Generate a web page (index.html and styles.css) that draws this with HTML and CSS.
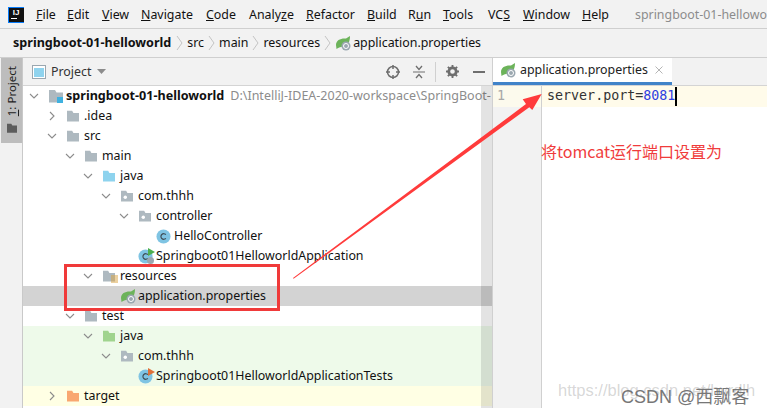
FILE: index.html
```html
<!DOCTYPE html>
<html lang="en">
<head>
<meta charset="utf-8">
<title>IntelliJ IDEA</title>
<link rel="stylesheet" href="styles.css">
</head>
<body>
<svg class="defs" width="0" height="0" aria-hidden="true">
  <defs>
    <symbol id="folder" viewBox="0 0 16 14"><path d="M1 1h6l1.500 2.500H15v10H1z"/></symbol>
    <symbol id="chev-d" viewBox="0 0 10 10"><path d="M1 3l4 4 4-4" fill="none" stroke="#8c8c8c" stroke-width="1.100"/></symbol>
    <symbol id="chev-r" viewBox="0 0 10 10"><path d="M3 1l4 4-4 4" fill="none" stroke="#8c8c8c" stroke-width="1.100"/></symbol>
    <symbol id="pkg" viewBox="0 0 16 14"><path d="M1 1h6l1.500 2.500H15v10H1z" fill="#aeb9c0"/><circle cx="6" cy="8.500" r="2" fill="#fff"/></symbol>
    <symbol id="leaf" viewBox="0 0 16 16"><path d="M1 10C1 5 6 3 11 3.500L15 1c0 6-2 10-7 10.500C5 12 3 13 1.500 14z" fill="#6cb35a"/><circle cx="11" cy="11" r="4.500" fill="#9aa7b0"/><circle cx="11" cy="11" r="2.500" fill="none" stroke="#fff"/></symbol>
    <symbol id="cls" viewBox="0 0 16 16"><circle cx="8" cy="8" r="7.500" fill="#7fc4e3"/><path d="M10.500 6a3 3 0 1 0 0 4" fill="none" stroke="#3d4a52" stroke-width="1.200"/></symbol>
  </defs>
</svg>

<div class="ide">
  <header class="menubar">
    <div class="logo"><span class="logo-text">IJ</span><i class="logo-bar"></i></div>
    <nav class="menus">
      <span class="m-file"><u>F</u>ile</span>
      <span class="m-edit"><u>E</u>dit</span>
      <span class="m-view"><u>V</u>iew</span>
      <span class="m-nav"><u>N</u>avigate</span>
      <span class="m-code"><u>C</u>ode</span>
      <span class="m-an">Analy<u>z</u>e</span>
      <span class="m-ref"><u>R</u>efactor</span>
      <span class="m-bui"><u>B</u>uild</span>
      <span class="m-run">R<u>u</u>n</span>
      <span class="m-too"><u>T</u>ools</span>
      <span class="m-vcs">VC<u>S</u></span>
      <span class="m-win"><u>W</u>indow</span>
      <span class="m-hel"><u>H</u>elp</span>
    </nav>
    <span class="wintitle">springboot-01-hellowo</span>
  </header>

  <div class="crumbs">
    <strong>springboot-01-helloworld</strong>
    <svg class="sep" width="7" height="16" viewBox="0 0 7 16"><path d="M1 1l5 7-5 7" fill="none" stroke="#c4c4c4"/></svg>
    <span>src</span>
    <svg class="sep" width="7" height="16" viewBox="0 0 7 16"><path d="M1 1l5 7-5 7" fill="none" stroke="#c4c4c4"/></svg>
    <span>main</span>
    <svg class="sep" width="7" height="16" viewBox="0 0 7 16"><path d="M1 1l5 7-5 7" fill="none" stroke="#c4c4c4"/></svg>
    <span>resources</span>
    <svg class="sep" width="7" height="16" viewBox="0 0 7 16"><path d="M1 1l5 7-5 7" fill="none" stroke="#c4c4c4"/></svg>
    <svg class="ico16" width="16" height="16"><use href="#leaf"/></svg>
    <span>application.properties</span>
  </div>

  <div class="workspace">
    <aside class="strip">
      <div class="strip-tab">
        <span class="strip-label"><u>1</u>: Project</span>
        <svg class="f-dark" width="12" height="10"><use href="#folder"/></svg>
      </div>
    </aside>

    <section class="project">
      <div class="proj-head">
        <svg width="14" height="14" viewBox="0 0 14 14" class="proj-ico"><rect x=".5" y=".5" width="13" height="13" fill="#fff" stroke="#9aa7b0"/><rect x="2" y="3" width="10" height="9" fill="#8fd3ee"/></svg>
        <span class="proj-title">Project</span>
        <svg class="proj-caret" width="9" height="5" viewBox="0 0 9 5"><path d="M0 0h9L4.500 5z" fill="#8c8c8c"/></svg>
        <div class="tools">
          <svg class="t-target" width="14" height="14" viewBox="0 0 14 14"><circle cx="7" cy="7" r="5.500" fill="none" stroke="#6e6e6e" stroke-width="1.500"/><path d="M7 0v4M7 10v4M0 7h4M10 7h4" stroke="#6e6e6e" stroke-width="1.500"/></svg>
          <svg class="t-collapse" width="12" height="14" viewBox="0 0 12 14"><path d="M0 7h12" stroke="#6e6e6e"/><path d="M3 1l3 3.500L9 1M3 13l3-3.500L9 13" fill="none" stroke="#6e6e6e" stroke-width="1.300"/></svg>
          <i class="tool-sep"></i>
          <svg class="t-gear" width="13" height="13" viewBox="0 0 14 14"><circle cx="7" cy="7" r="4" fill="none" stroke="#6e6e6e" stroke-width="3"/><path d="M7 0v3M7 11v3M0 7h3M11 7h3M2 2l2 2M10 10l2 2M12 2l-2 2M2 12l2-2" stroke="#6e6e6e" stroke-width="2"/></svg>
          <i class="tool-min"></i>
        </div>
      </div>

      <div class="tree">
        <div class="row d0"><svg class="chev"><use href="#chev-d"/></svg><span class="ib"><svg class="f-root" width="16" height="14"><use href="#folder"/></svg><i class="root-badge"></i></span><b>springboot-01-helloworld</b><span class="path">D:\IntelliJ-IDEA-2020-workspace\SpringBoot-</span></div>
        <div class="row d1"><svg class="chev"><use href="#chev-r"/></svg><span class="ib"><svg class="f-grey" width="14" height="12"><use href="#folder"/></svg></span><span>.idea</span></div>
        <div class="row d1"><svg class="chev"><use href="#chev-d"/></svg><span class="ib"><svg class="f-grey" width="14" height="12"><use href="#folder"/></svg></span><span>src</span></div>
        <div class="row d2"><svg class="chev"><use href="#chev-d"/></svg><span class="ib"><svg class="f-grey" width="14" height="12"><use href="#folder"/></svg></span><span>main</span></div>
        <div class="row d3"><svg class="chev"><use href="#chev-d"/></svg><span class="ib"><svg class="f-blue" width="14" height="12"><use href="#folder"/></svg></span><span>java</span></div>
        <div class="row d4"><svg class="chev"><use href="#chev-d"/></svg><span class="ib"><svg width="14" height="12"><use href="#pkg"/></svg></span><span>com.thhh</span></div>
        <div class="row d5"><svg class="chev"><use href="#chev-d"/></svg><span class="ib"><svg width="14" height="12"><use href="#pkg"/></svg></span><span>controller</span></div>
        <div class="row d6"><i class="chev"></i><span class="ib"><svg width="15" height="15"><use href="#cls"/></svg></span><span>HelloController</span></div>
        <div class="row d5"><i class="chev"></i><span class="ib"><svg width="15" height="15"><use href="#cls"/></svg><svg class="badge-run" width="7" height="8" viewBox="0 0 7 8"><path d="M0 0l7 4-7 4z" fill="#4caf50"/></svg><i class="badge-gear"></i></span><span>Springboot01HelloworldApplication</span></div>
        <div class="row d3"><svg class="chev"><use href="#chev-d"/></svg><span class="ib"><svg class="f-grey" width="14" height="12"><use href="#folder"/></svg><svg class="badge-res" width="7" height="8" viewBox="0 0 7 8"><path d="M0 1h7M0 3h7M0 5h7M0 7h7" stroke="#d9a343"/></svg></span><span>resources</span></div>
        <div class="row d4 sel"><i class="chev"></i><span class="ib"><svg width="16" height="16"><use href="#leaf"/></svg></span><span>application.properties</span></div>
        <div class="row d2"><svg class="chev"><use href="#chev-d"/></svg><span class="ib"><svg class="f-grey" width="14" height="12"><use href="#folder"/></svg></span><span>test</span></div>
        <div class="row d3 green"><svg class="chev"><use href="#chev-d"/></svg><span class="ib"><svg class="f-green" width="14" height="12"><use href="#folder"/></svg></span><span>java</span></div>
        <div class="row d4 green"><svg class="chev"><use href="#chev-d"/></svg><span class="ib"><svg width="14" height="12"><use href="#pkg"/></svg></span><span>com.thhh</span></div>
        <div class="row d5 green"><i class="chev"></i><span class="ib"><svg width="15" height="15"><use href="#cls"/></svg><svg class="badge-run" width="7" height="8" viewBox="0 0 7 8"><path d="M0 0l7 4-7 4z" fill="#e0703a"/></svg></span><span>Springboot01HelloworldApplicationTests</span></div>
        <div class="row d1 yellow"><svg class="chev"><use href="#chev-r"/></svg><span class="ib"><svg class="f-orange" width="14" height="12"><use href="#folder"/></svg></span><span>target</span></div>
        <div class="scroll"></div>
      </div>
    </section>

    <section class="editor">
      <div class="tabs">
        <div class="tab">
          <svg width="16" height="16"><use href="#leaf"/></svg>
          <span>application.properties</span>
          <svg class="tab-x" width="8" height="8" viewBox="0 0 8 8"><path d="M.5.500l7 7M7.500.500l-7 7" stroke="#b5b5b5"/></svg>
        </div>
      </div>
      <div class="code">
        <div class="gutter"><div class="ln">1</div></div>
        <div class="lines"><div class="line">server.port=<em>8081</em><i class="caret"></i></div></div>
      </div>
    </section>
  </div>
</div>

<div class="mark-box"></div>
<svg class="arrow" width="260" height="195" viewBox="290 90 260 195"><polygon points="541.700,94 522.700,99.300 526,104 293,278 293.600,278.800 529.300,107.300 532.300,110" fill="#ff3b3b"/></svg>
<div class="note">将tomcat运行端口设置为</div>
<div class="wm-url">https://blog.csdn.net/hyrdlh</div>
<div class="wm-name">CSDN @西飘客</div>
</body>
</html>
```
FILE: styles.css
```css
* { box-sizing: border-box; }
html, body { margin: 0; padding: 0; background: #fff; }
body { width: 767px; height: 416px; overflow: hidden; position: relative; font: 12.400px/20px "Noto Sans", "Open Sans", sans-serif; color: #111; }
.defs { position: absolute; }
.ide { width: 767px; height: 408px; display: flex; flex-direction: column; background: #f2f2f2; }

.menubar { height: 29px; flex: none; display: flex; align-items: center; border-bottom: 1px solid #cfcfcf; overflow: hidden; white-space: nowrap; padding: 1px 0 0 8px; }
.logo { width: 16px; height: 16px; flex: none; background: #111; border-left: 1px solid #087cfa; border-top: 1px solid #087cfa; border-bottom: 1px solid #087cfa; display: flex; flex-direction: column; align-items: center; padding-right: 1px; }
.logo-text { color: #fff; font: bold 8px/9px "Liberation Sans", sans-serif; }
.logo-bar { width: 6px; height: 1px; background: #fff; margin: 1px 5px 0 0; }
.menus { display: flex; margin-left: 12px; }
.menus span { display: block; }
.m-file { width: 31px; } .m-edit { width: 35px; } .m-view { width: 39px; } .m-nav { width: 65px; }
.m-code { width: 43px; } .m-an { width: 57px; } .m-ref { width: 61px; } .m-bui { width: 41px; }
.m-run { width: 35px; } .m-too { width: 45px; } .m-vcs { width: 35px; } .m-win { width: 59px; } .m-hel { width: 53px; }
.wintitle { color: #8c8c8c; }

.crumbs { height: 29px; flex: none; display: flex; align-items: center; gap: 4px; padding-left: 13px; border-bottom: 1px solid #cfcfcf; white-space: nowrap; }
.crumbs strong { font-weight: 700; font-size: 12.600px; margin-right: 1px; }
.sep { flex: none; }
.ico16 { flex: none; margin-right: -2px; }

.workspace { flex: 1; display: flex; min-height: 0; }
.strip { width: 23px; flex: none; border-right: 1px solid #c9c9c9; padding-left: 1px; background: #f2f2f2; }
.strip-tab { height: 85px; background: #bdbdbd; display: flex; flex-direction: column; align-items: center; padding-top: 8px; gap: 7px; }
.strip-label { writing-mode: vertical-rl; transform: rotate(180deg); line-height: 14px; font-size: 11.500px; color: #222; }
.f-dark { fill: #5c5c5c; }

.project { width: 469px; flex: none; display: flex; flex-direction: column; background: #fff; }
.proj-head { height: 28px; flex: none; background: #f2f2f2; border-bottom: 1px solid #d4d4d4; display: flex; align-items: center; padding-left: 9px; }
.proj-ico { flex: none; }
.proj-title { margin-left: 5px; color: #333; }
.proj-caret { margin-left: 6px; }
.tools { margin-left: auto; display: flex; align-items: center; padding-right: 7px; }
.t-collapse { margin-left: 13px; }
.tool-sep { width: 1px; height: 20px; background: #d0d0d0; margin: 0 10px; }
.tool-min { width: 12px; height: 2px; background: #6e6e6e; margin-left: 14px; }

.tree { flex: 1; position: relative; background: #fff; overflow: hidden; }
.row { height: 20px; display: flex; align-items: center; white-space: nowrap; padding-left: 2px; }
.row.d1 { padding-left: 20px; } .row.d2 { padding-left: 38px; } .row.d3 { padding-left: 56px; }
.row.d4 { padding-left: 74px; } .row.d5 { padding-left: 92px; } .row.d6 { padding-left: 110px; }
.sel { background: #d3d3d3; }
.green { background: #eefaea; }
.yellow { background: #ffffe4; }
.chev { width: 10px; height: 10px; margin: 0 4px; flex: none; display: block; }
.ib { width: 23px; height: 20px; flex: none; display: flex; align-items: center; padding-left: 5px; position: relative; }
.row b { font-weight: 700; font-size: 12.600px; }
.path { color: #8c8c8c; margin-left: 6px; font-size: 12.500px; }
.f-root { fill: #aeb9c0; }
.f-grey { fill: #aeb9c0; }
.f-blue { fill: #8ed3ee; }
.f-green { fill: #a0d48e; }
.f-orange { fill: #f9a770; }
.root-badge { position: absolute; left: 14px; top: 11px; width: 6px; height: 6px; background: #3fb1e0; }
.badge-run { position: absolute; left: 15px; top: 2px; }
.badge-res { position: absolute; left: 14px; top: 9px; }
.badge-gear { position: absolute; left: 14px; top: 11px; width: 7px; height: 7px; border-radius: 50%; background: #9aa7b0; }
.scroll { position: absolute; right: 0; top: 0; bottom: 0; width: 11px; background: rgba(0, 0, 0, .11); }

.editor { flex: 1; display: flex; flex-direction: column; min-width: 0; border-left: 1px solid #d0d0d0; background: #fff; }
.tabs { height: 28px; flex: none; background: #f2f2f2; border-bottom: 1px solid #d4d4d4; display: flex; }
.tab { width: 179px; height: 27px; background: #fff; border-bottom: 3px solid #4083c9; display: flex; align-items: center; padding-left: 7px; gap: 4px; white-space: nowrap; color: #222; }
.tab-x { margin-left: 3px; }
.code { flex: 1; display: flex; min-height: 0; }
.gutter { width: 49px; flex: none; background: #f2f2f2; border-right: 1px solid #d0d0d0; }
.ln { height: 21px; background: #fcfaed; color: #a8a8a8; font: 13.330px/20px "DejaVu Sans Mono", monospace; padding-left: 4px; }
.lines { flex: 1; min-width: 0; }
.line { height: 21px; background: #fffbea; padding-left: 5px; font: 13.330px/20px "DejaVu Sans Mono", monospace; color: #333; display: flex; }
.line em { font-style: normal; color: #2f3fe0; }
.caret { width: 2px; height: 19px; background: #000; margin-top: 1px; }

.mark-box { position: absolute; left: 64px; top: 264px; width: 216px; height: 47px; border: 3px solid #f03a3a; }
.arrow { position: absolute; left: 290px; top: 90px; }
.note { position: absolute; left: 541px; top: 141px; font: 16px/20px "Noto Sans CJK SC", sans-serif; color: #f03c3c; white-space: nowrap; }
.wm-url { position: absolute; left: 558px; top: 380px; font: 16.500px/20px "Liberation Sans", sans-serif; color: rgba(120, 120, 120, .3); white-space: nowrap; }
.wm-name { position: absolute; left: 621px; top: 386px; font: 18px/22px "Liberation Sans", "Noto Sans CJK SC", sans-serif; color: #777; white-space: nowrap; }
```
